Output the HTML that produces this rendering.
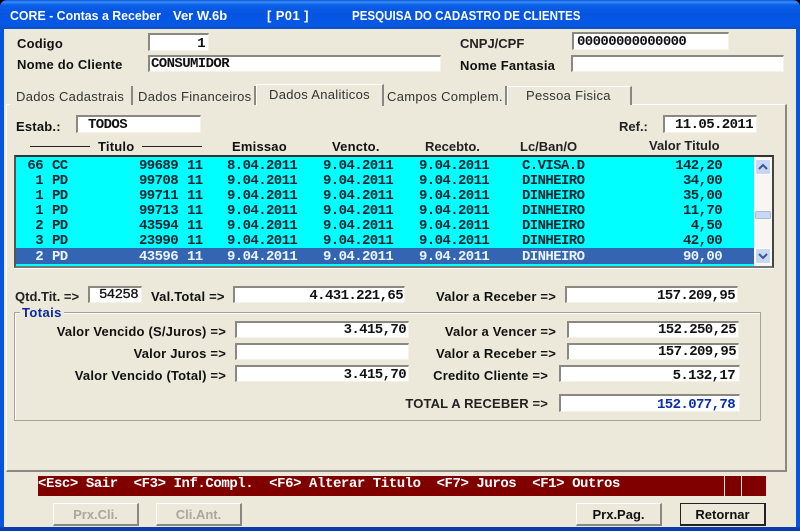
<!DOCTYPE html>
<html>
<head>
<meta charset="utf-8">
<style>
html,body{margin:0;padding:0;width:800px;height:531px;overflow:hidden;background:#000}
#w{position:relative;width:800px;height:531px;overflow:hidden;background:#0855dd;border-radius:7px 7px 0 0}
#w div{position:absolute;box-sizing:border-box;white-space:pre}
#tb{left:0;top:0;width:800px;height:29px;background:linear-gradient(#0a52d6 0,#3a8cf8 2px,#0a5fe8 5px,#0554e0 14px,#0558e6 24px,#0a50c8 29px);border-radius:7px 7px 0 0}
#cl{left:4px;top:29px;width:792px;height:498px;background:#ece8da}
#bb{left:0;top:527px;width:800px;height:4px;background:#0a3cb0}
.t{font:bold 13px/14px "Liberation Sans",sans-serif;color:#fff;top:9px;transform-origin:0 50%}
.l{font:bold 13px/14px "Liberation Sans",sans-serif;color:#111;letter-spacing:.2px}
.r{text-align:right}
.h{font:bold 13px/14px "Liberation Sans",sans-serif;color:#222}
.f{background:#fff;border-top:2px solid #8a8880;border-left:2px solid #8a8880;border-right:1px solid #f4f2e8;border-bottom:1px solid #f4f2e8;font:bold 14px/15px "Liberation Mono",monospace;letter-spacing:-.6px;color:#111;text-align:right;padding-right:2px}
.fl{text-align:left;padding-left:1px}
.tab{font:13px/22px "Liberation Sans",sans-serif;letter-spacing:.3px;color:#333;height:19px;top:86px;border-right:2px solid #888;padding-left:6px;background:#ece8da}
.row{left:0;width:738px;height:15px;background:#0ff;font:bold 14px/17px "Liberation Mono",monospace;letter-spacing:-.6px;color:#0a2430}
.row span{position:absolute;top:0}
.a{left:11px;width:16px;text-align:right}.b{left:36px}.c{left:123px}.d{left:171px}.e{left:211px}.g{left:307px}.i{left:403px}.j{left:506px}.k{right:32px}
.sel{background:#3465b2;color:#eaf4ff}
.btn{width:86px;height:23px;top:503px;background:#ece8da;border:1px solid #fff;border-right:2px solid #8a8880;border-bottom:2px solid #8a8880;font:bold 13px/21px "Liberation Sans",sans-serif;text-align:center;color:#111}
</style>
</head>
<body>
<div id="w">
<div id="tb"></div>
<div id="cl"></div>
<div id="bb"></div>
<div class="t" style="left:10px;transform:scaleX(.95)">CORE - Contas a Receber</div>
<div class="t" style="left:173px">Ver W.6b</div>
<div class="t" style="left:267px;letter-spacing:.4px">[ P01 ]</div>
<div class="t" style="left:352px;transform:scaleX(.89)">PESQUISA DO CADASTRO DE CLIENTES</div>

<div class="l" style="left:17px;top:37px">Codigo</div>
<div class="f" style="left:148px;top:33px;width:61px;height:18px;padding-right:3px;line-height:19px">1</div>
<div class="l" style="left:17px;top:58px">Nome do Cliente</div>
<div class="f fl" style="left:148px;top:55px;width:293px;height:17px">CONSUMIDOR</div>
<div class="h" style="left:460px;top:37px">CNPJ/CPF</div>
<div class="f fl" style="left:572px;top:32px;width:157px;height:18px;padding-left:3px;line-height:17px">00000000000000</div>
<div class="l" style="left:460px;top:59px">Nome Fantasia</div>
<div class="f" style="left:571px;top:55px;width:213px;height:17px"></div>

<div style="left:6px;top:104px;width:781px;height:368px;border-top:1px solid #fff;border-left:1px solid #fff;border-right:2px solid #8a8880;border-bottom:2px solid #8a8880"></div>
<div class="tab" style="left:10px;width:123px">Dados Cadastrais</div>
<div class="tab" style="left:133px;width:123px;padding-left:5px">Dados Financeiros</div>
<div class="tab" style="left:256px;width:128px;top:84px;height:22px;padding-left:12px;border-top:1px solid #fff;border-left:1px solid #fff;line-height:19px">Dados Analiticos</div>
<div class="tab" style="left:384px;width:123px;padding-left:3px">Campos Complem.</div>
<div class="tab" style="left:507px;width:125px;padding-left:18px;border-top:1px solid #fff;border-left:1px solid #fff;line-height:18px">Pessoa Fisica</div>

<div class="l" style="left:16px;top:120px">Estab.:</div>
<div class="f fl" style="left:76px;top:115px;width:125px;height:18px;padding-left:10px;line-height:17px">TODOS</div>
<div class="h" style="left:619px;top:120px">Ref.:</div>
<div class="f" style="left:663px;top:115px;width:94px;height:18px;padding-right:3px;line-height:17px">11.05.2011</div>

<div style="left:30px;top:146px;width:60px;height:1px;background:#222"></div>
<div class="l" style="left:98px;top:140px">Titulo</div>
<div style="left:142px;top:146px;width:60px;height:1px;background:#222"></div>
<div class="l" style="left:232px;top:140px">Emissao</div>
<div class="l" style="left:332px;top:140px">Vencto.</div>
<div class="h" style="left:425px;top:140px">Recebto.</div>
<div class="h" style="left:520px;top:140px">Lc/Ban/O</div>
<div class="h" style="left:649px;top:139px">Valor Titulo</div>

<div style="left:14px;top:155px;width:760px;height:113px;background:#fff;border:2px solid;border-color:#333 #444 #777 #555;box-shadow:0 1px 0 #fff">
  <div class="row" style="top:0;height:16px;line-height:19px"><span class="a">66</span><span class="b">CC</span><span class="c">99689</span><span class="d">11</span><span class="e">8.04.2011</span><span class="g">9.04.2011</span><span class="i">9.04.2011</span><span class="j">C.VISA.D</span><span class="k">142,20</span></div>
  <div class="row" style="top:16px"><span class="a">1</span><span class="b">PD</span><span class="c">99708</span><span class="d">11</span><span class="e">9.04.2011</span><span class="g">9.04.2011</span><span class="i">9.04.2011</span><span class="j">DINHEIRO</span><span class="k">34,00</span></div>
  <div class="row" style="top:31px"><span class="a">1</span><span class="b">PD</span><span class="c">99711</span><span class="d">11</span><span class="e">9.04.2011</span><span class="g">9.04.2011</span><span class="i">9.04.2011</span><span class="j">DINHEIRO</span><span class="k">35,00</span></div>
  <div class="row" style="top:46px"><span class="a">1</span><span class="b">PD</span><span class="c">99713</span><span class="d">11</span><span class="e">9.04.2011</span><span class="g">9.04.2011</span><span class="i">9.04.2011</span><span class="j">DINHEIRO</span><span class="k">11,70</span></div>
  <div class="row" style="top:61px"><span class="a">2</span><span class="b">PD</span><span class="c">43594</span><span class="d">11</span><span class="e">9.04.2011</span><span class="g">9.04.2011</span><span class="i">9.04.2011</span><span class="j">DINHEIRO</span><span class="k">4,50</span></div>
  <div class="row" style="top:76px"><span class="a">3</span><span class="b">PD</span><span class="c">23990</span><span class="d">11</span><span class="e">9.04.2011</span><span class="g">9.04.2011</span><span class="i">9.04.2011</span><span class="j">DINHEIRO</span><span class="k">42,00</span></div>
  <div class="row sel" style="top:91px;height:16px;line-height:18px"><span class="a">2</span><span class="b">PD</span><span class="c">43596</span><span class="d">11</span><span class="e">9.04.2011</span><span class="g">9.04.2011</span><span class="i">9.04.2011</span><span class="j">DINHEIRO</span><span class="k">90,00</span></div>
  <div class="row" style="top:107px;height:2px"></div>
  <div style="left:738px;top:0;width:18px;height:109px;background:#f7f6f0"></div>
  <div style="left:739px;top:2px;width:16px;height:16px;background:#c8d8f4;border:1px solid #fff;border-radius:2px"><svg width="14" height="14" style="position:absolute;left:0;top:0"><path d="M3 9l4-4 4 4" fill="none" stroke="#3a5590" stroke-width="2"/></svg></div>
  <div style="left:739px;top:54px;width:16px;height:8px;background:#c8d8f4;border:1px solid #a8b8d8;border-radius:2px"></div>
  <div style="left:739px;top:91px;width:16px;height:16px;background:#c8d8f4;border:1px solid #fff;border-radius:2px"><svg width="14" height="14" style="position:absolute;left:0;top:0"><path d="M3 5l4 4 4-4" fill="none" stroke="#3a5590" stroke-width="2"/></svg></div>
</div>

<div class="h" style="left:15px;top:290px">Qtd.Tit. =&gt;</div>
<div class="f" style="left:88px;top:286px;width:54px;height:17px;padding-right:3px;font-weight:normal;-webkit-text-stroke:.3px #111">54258</div>
<div class="l" style="left:151px;top:290px">Val.Total =&gt;</div>
<div class="f" style="left:233px;top:286px;width:172px;height:17px;padding-right:1px;line-height:17px">4.431.221,65</div>
<div class="l r" style="left:400px;width:156px;top:290px">Valor a Receber =&gt;</div>
<div class="f" style="left:565px;top:286px;width:173px;height:17px;line-height:17px">157.209,95</div>

<div style="left:14px;top:312px;width:747px;height:109px;border:1px solid #a5a396;box-shadow:inset 1px 1px 0 #fff"></div>
<div class="l" style="left:20px;top:306px;padding:0 2px;background:#ece8da;color:#0a2a9a;letter-spacing:.4px">Totais</div>

<div class="l r" style="left:30px;width:196px;top:325px">Valor Vencido (S/Juros) =&gt;</div>
<div class="f" style="left:235px;top:321px;width:174px;height:17px">3.415,70</div>
<div class="l r" style="left:30px;width:196px;top:347px">Valor Juros =&gt;</div>
<div class="f" style="left:235px;top:343px;width:174px;height:17px"></div>
<div class="l r" style="left:30px;width:196px;top:369px">Valor Vencido (Total) =&gt;</div>
<div class="f" style="left:235px;top:365px;width:174px;height:17px;line-height:17px">3.415,70</div>

<div class="l r" style="left:400px;width:156px;top:325px">Valor a Vencer =&gt;</div>
<div class="f" style="left:567px;top:321px;width:172px;height:17px">152.250,25</div>
<div class="l r" style="left:400px;width:156px;top:347px">Valor a Receber =&gt;</div>
<div class="f" style="left:567px;top:343px;width:172px;height:17px">157.209,95</div>
<div class="l r" style="left:400px;width:148px;top:369px">Credito Cliente =&gt;</div>
<div class="f" style="left:559px;top:365px;width:181px;height:17px;padding-right:4px;line-height:19px">5.132,17</div>
<div class="h r" style="left:400px;width:148px;top:397px;letter-spacing:.15px">TOTAL A RECEBER =&gt;</div>
<div class="f" style="left:559px;top:394px;width:181px;height:18px;padding-right:4px;color:#0a2ab0;line-height:18px">152.077,78</div>

<div style="left:38px;top:476px;width:728px;height:20px;background:#800000;color:#fff;font:bold 14px/16px 'Liberation Mono',monospace;letter-spacing:-.43px">&lt;Esc&gt; Sair  &lt;F3&gt; Inf.Compl.  &lt;F6&gt; Alterar Titulo  &lt;F7&gt; Juros  &lt;F1&gt; Outros</div>
<div style="left:724px;top:476px;width:1px;height:20px;background:#ece8da"></div>
<div style="left:741px;top:476px;width:1px;height:20px;background:#ece8da"></div>

<div class="btn" style="left:53px;color:#aaa89d">Prx.Cli.</div>
<div class="btn" style="left:156px;color:#aaa89d">Cli.Ant.</div>
<div class="btn" style="left:576px">Prx.Pag.</div>
<div class="btn" style="left:680px;border:1px solid #222;border-right:2px solid #222;border-bottom:2px solid #222">Retornar</div>
</div>
</body>
</html>
